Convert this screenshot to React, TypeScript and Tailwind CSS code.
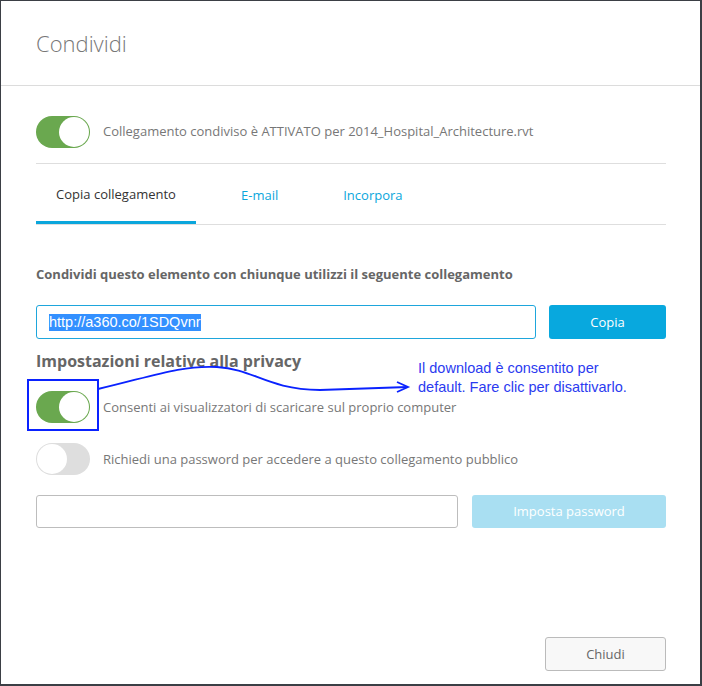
import React from "react";

function Toggle({ on }: { on: boolean }) {
  return (
    <div
      className={
        "relative w-[54px] h-[32px] rounded-full shrink-0 " +
        (on ? "bg-[#6aa84f]" : "bg-[#dedede]")
      }
    >
      <div
        className={
          "absolute top-[1px] w-[30px] h-[30px] rounded-full bg-white " +
          (on ? "right-[1px]" : "left-[1px]")
        }
      />
    </div>
  );
}

export default function App() {
  return (
    <div
      className="relative w-[702px] h-[686px] bg-white border-l border-t border-r-2 border-b-2 border-[#3b3f45] flex flex-col"
      style={{ fontFamily: '"Open Sans", sans-serif' }}
    >
      <div className="h-[85px] border-b border-[#dcdcdc] flex items-center pl-[35px] shrink-0">
        <div className="text-[22px] font-light text-[#777] pt-[1px]">Condividi</div>
      </div>

      <div className="pl-[35px] pr-[34px] flex flex-col flex-1">
        <div className="mt-[30px] flex items-center gap-[13px] h-[32px]">
          <Toggle on />
          <div className="text-[13px] text-[#777]">
            Collegamento condiviso è ATTIVATO per 2014_Hospital_Architecture.rvt
          </div>
        </div>

        <div className="mt-[15px] border-t border-[#dedede]" />

        <div className="flex h-[61px] border-b border-[#dedede] text-[13px]">
          <div className="w-[160px] flex items-center justify-center border-b-[3px] border-[#0aa6dc] text-[#333] pt-[4px]">
            Copia collegamento
          </div>
          <div className="ml-[45px] flex items-center text-[#0aa6dc] pt-[4px]">E-mail</div>
          <div className="ml-[65px] flex items-center text-[#0aa6dc] pt-[4px]">Incorpora</div>
        </div>

        <div className="mt-[40px] text-[13px] font-bold text-[#666] leading-[18px]">
          Condividi questo elemento con chiunque utilizzi il seguente collegamento
        </div>

        <div className="mt-[22px] flex gap-[13px] h-[34px]">
          <div className="flex-1 border border-[#1ea6dc] rounded-[3px] flex items-center pl-[12px]">
            <span
              className="bg-[#3390ff] text-white text-[14.5px] leading-[17px]"
              style={{ fontFamily: '"Liberation Sans", Arial, sans-serif' }}
            >
              http://a360.co/1SDQvnr
            </span>
          </div>
          <div className="w-[117px] bg-[#08a8de] rounded-[3px] text-white text-[13px] flex items-center justify-center pt-[1px]">
            Copia
          </div>
        </div>

        <div className="mt-[11px] text-[16px] font-bold text-[#666] leading-[22px]">
          Impostazioni relative alla privacy
        </div>

        <div className="mt-[19px] flex items-center gap-[13px] h-[32px]">
          <Toggle on />
          <div className="text-[13px] text-[#777] pt-[1px]">
            Consenti ai visualizzatori di scaricare sul proprio computer
          </div>
        </div>

        <div className="mt-[20px] flex items-center gap-[13px] h-[32px]">
          <Toggle on={false} />
          <div className="text-[13px] text-[#777] pt-[1px]">
            Richiedi una password per accedere a questo collegamento pubblico
          </div>
        </div>

        <div className="mt-[20px] flex gap-[14px] h-[33px]">
          <div className="flex-1 border border-[#bdbdbd] rounded-[3px]" />
          <div className="w-[194px] bg-[#a9dff2] rounded-[3px] text-white text-[13px] flex items-center justify-center pt-[1px]">
            Imposta password
          </div>
        </div>

        <div className="mt-auto mb-[13px] flex justify-end">
          <div className="w-[121px] h-[34px] border border-[#bbb] bg-[#f8f8f8] rounded-[3px] text-[13px] text-[#666] flex items-center justify-center pt-[1px]">
            Chiudi
          </div>
        </div>
      </div>

      {/* annotation overlay */}
      <div className="absolute left-[26px] top-[378px] w-[72px] h-[52px] border-2 border-[#0a22ff]" />
      <svg
        className="absolute left-[-1px] top-[-1px] pointer-events-none"
        width="702"
        height="686"
        viewBox="0 0 702 686"
      >
        <path
          d="M98 389 C 150 377, 180 365, 217 367 S 266 389, 320 390 L 408 387"
          fill="none"
          stroke="#0a22ff"
          strokeWidth="1.8"
        />
        <path
          d="M397 382 L408 387 L397 392"
          fill="none"
          stroke="#0a22ff"
          strokeWidth="1.8"
        />
      </svg>
      <div
        className="absolute left-[417px] top-[358px] text-[14.5px] leading-[19px] text-[#2b3bf0]"
        style={{ fontFamily: '"Liberation Sans", Arial, sans-serif' }}
      >
        <div>Il download è consentito per</div>
        <div>default. Fare clic per disattivarlo.</div>
      </div>
    </div>
  );
}
